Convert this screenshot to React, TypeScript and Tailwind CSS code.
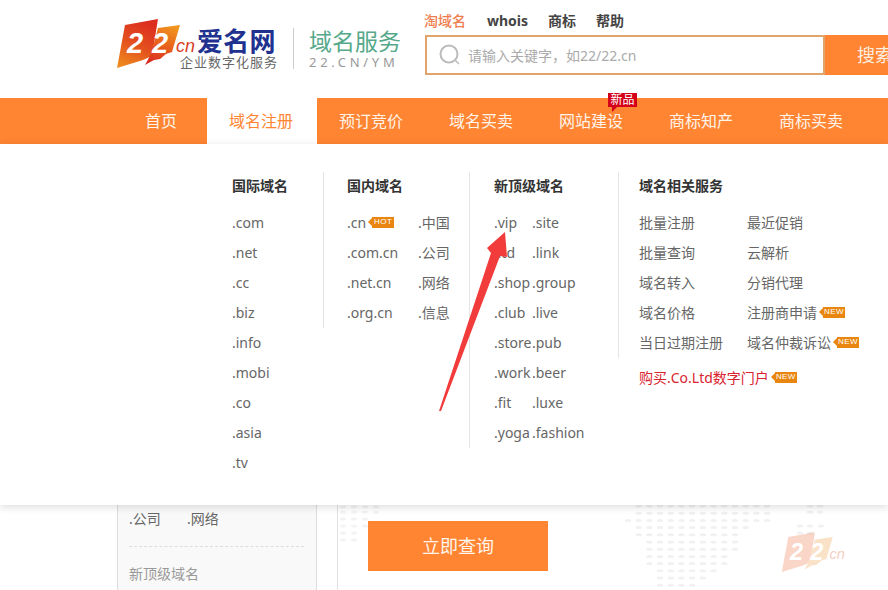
import type { ReactNode } from 'react';

const navItems = ['域名注册', '预订竞价', '域名买卖', '网站建设', '商标知产', '商标买卖'];

const intlDomains = ['.com', '.net', '.cc', '.biz', '.info', '.mobi', '.co', '.asia', '.tv'];

const cnDomains: [string, string][] = [
  ['.cn', '.中国'],
  ['.com.cn', '.公司'],
  ['.net.cn', '.网络'],
  ['.org.cn', '.信息']
];

const newDomains: [string, string][] = [
  ['.vip', '.site'],
  ['.ltd', '.link'],
  ['.shop', '.group'],
  ['.club', '.live'],
  ['.store', '.pub'],
  ['.work', '.beer'],
  ['.fit', '.luxe'],
  ['.yoga', '.fashion']
];

const services: [string, string, boolean][] = [
  ['批量注册', '最近促销', false],
  ['批量查询', '云解析', false],
  ['域名转入', '分销代理', false],
  ['域名价格', '注册商申请', true],
  ['当日过期注册', '域名仲裁诉讼', true]
];

// row widths of the faint world map behind the footer, [first column, column count]
const mapRows: [number, number][] = [
  [1, 13],
  [1, 13],
  [0, 14],
  [1, 11],
  [1, 10],
  [2, 9],
  [2, 9],
  [2, 8],
  [2, 8],
  [3, 6],
  [3, 5],
  [3, 4]
];

function Tag({ label }: { label: string }) {
  return (
    <span className="ml-[2px] inline-flex items-center">
      <span className="h-0 w-0 border-y-[4px] border-r-[4px] border-y-transparent border-r-[#e8860f]" />
      <span className="flex h-[11px] w-[22px] items-center justify-center bg-[#e8860f] font-['Liberation_Sans',sans-serif] text-[8px] leading-none tracking-[0.4px] text-white">
        {label}
      </span>
    </span>
  );
}

function Row({ children }: { children: ReactNode }) {
  return <div className="flex h-[30px] items-center pb-[2px] whitespace-nowrap text-[#666]">{children}</div>;
}

function Heading({ children }: { children: ReactNode }) {
  return <div className="mb-[8px] flex h-[28px] items-center pb-[2px] font-bold text-[#333]">{children}</div>;
}

function LogoShapes({ a, b, cn }: { a: string; b: string; cn: string }) {
  return (
    <>
      <polygon points="9,7 42,1 36,38 27,42 1,50" fill={a} />
      <polygon points="42,10 64,7 56,34 50,36 44,41 38,42 29,47 35,36 38,25" fill={b} />
      <text x="11" y="35" fontFamily="'Liberation Sans', sans-serif" fontSize="29" fontWeight="700" fontStyle="italic" fill="#fff">
        2
      </text>
      <text x="36" y="35" fontFamily="'Liberation Sans', sans-serif" fontSize="29" fontWeight="700" fontStyle="italic" fill="#fff">
        2
      </text>
      <text x="60" y="34" fontFamily="'Liberation Sans', sans-serif" fontSize="18" fontStyle="italic" fill={cn}>
        cn
      </text>
    </>
  );
}

function LogoMark({ className }: { className?: string }) {
  return (
    <svg viewBox="0 0 84 52" className={className}>
      <defs>
        <linearGradient id="flagA" x1="0.6" y1="0" x2="0.2" y2="1">
          <stop offset="0" stopColor="#dc2d20" />
          <stop offset="0.5" stopColor="#e3501e" />
          <stop offset="1" stopColor="#ee8a1e" />
        </linearGradient>
        <linearGradient id="flagB" x1="0.7" y1="0" x2="0.3" y2="1">
          <stop offset="0" stopColor="#f0941f" />
          <stop offset="0.5" stopColor="#e8601c" />
          <stop offset="1" stopColor="#d92a20" />
        </linearGradient>
      </defs>
      <LogoShapes a="url(#flagA)" b="url(#flagB)" cn="#d9401f" />
    </svg>
  );
}

export default function App() {
  return (
    <div className="relative h-[590px] w-[888px] overflow-hidden bg-white font-['Noto_Sans','Noto_Sans_CJK_SC',sans-serif] text-[14px]">
      {/* header */}
      <header className="flex h-[98px] items-start pl-[116px]">
        <LogoMark className="mt-[18px] h-[52px] w-[84px] shrink-0" />
        <div className="mt-[25px] ml-[-20px] w-[98px] shrink-0">
          <div className="h-[32px] pl-[17px] text-[26px] leading-[32px] font-bold tracking-[0.2px] whitespace-nowrap text-[#20318f]">
            爱名网
          </div>
          <div className="mt-[-3px] text-[13px] leading-[16px] tracking-[1px] whitespace-nowrap text-[#666]">
            企业数字化服务
          </div>
        </div>
        <div className="mt-[28px] ml-[15px] h-[41px] w-px shrink-0 bg-[#ccc]" />
        <div className="mt-[25px] ml-[15px] w-[100px] shrink-0">
          <div className="h-[32px] text-[23px] leading-[32px] whitespace-nowrap text-[#55a98a]">域名服务</div>
          <div className="mt-[-3px] text-[13px] leading-[17px] tracking-[3.7px] whitespace-nowrap text-[#999]">22.CN/YM</div>
        </div>
        <div className="ml-[15px] shrink-0 pt-[11px]">
          <div className="flex h-[19px] items-center text-[14px] font-bold whitespace-nowrap text-[#444]">
            <span className="w-[63px] font-medium text-[#ef7d4e]">淘域名</span>
            <span className="w-[61px]">whois</span>
            <span className="w-[48px]">商标</span>
            <span>帮助</span>
          </div>
          <div className="mt-[5px] ml-px flex h-[40px] w-[500px]">
            <div className="flex w-[400px] items-center border-[2px] border-[#dfa56a] pl-[12px]">
              <svg viewBox="0 0 22 22" className="h-[22px] w-[22px]" fill="none" stroke="#bbb">
                <circle cx="10" cy="10" r="8.5" strokeWidth="2" />
                <path d="M16.5 16.5L20 20" strokeWidth="1.5" />
              </svg>
              <span className="ml-[7px] text-[#aaa]">请输入关键字，如22/22.cn</span>
            </div>
            <div className="flex-1 bg-[#ff8533] pl-[32px] text-[18px] leading-[40px] text-[#fdeee0]">搜索</div>
          </div>
        </div>
      </header>

      {/* main nav */}
      <nav className="flex h-[46px] bg-[#ff8533] pl-[123px] text-[16px] leading-[46px] text-[#fff4ea]">
        <div className="w-[84px] pl-[22px]">首页</div>
        {navItems.map((item, i) => (
          <div
            key={item}
            className={`relative w-[110px] pl-[22px] ${i === 0 ? 'bg-white text-[#ff8533]' : ''}`}
          >
            {item}
            {i === 3 && (
              <span className="absolute top-[-5px] left-[71px] flex h-[14px] w-[29px] items-center justify-center bg-[#d4001a] text-[12px] leading-none text-white">
                新品
                <span className="absolute top-[14px] left-[4px] h-0 w-0 border-t-[5px] border-r-[5px] border-t-[#d4001a] border-r-transparent" />
              </span>
            )}
          </div>
        ))}
      </nav>

      {/* dropdown panel */}
      <div className="relative z-10 flex h-[361px] items-start bg-white pt-[28px] pl-[232px] shadow-[0_2px_8px_rgba(0,0,0,0.14)]">
        <div className="w-[91px]">
          <Heading>国际域名</Heading>
          {intlDomains.map((d) => (
            <Row key={d}>{d}</Row>
          ))}
        </div>

        <div className="w-[146px] border-l border-[#e5e5e5] pl-[23px]">
          <Heading>国内域名</Heading>
          {cnDomains.map(([a, b], i) => (
            <Row key={a}>
              <div className="flex w-[71px] items-center">
                {a}
                {i === 0 && <Tag label="HOT" />}
              </div>
              {b}
            </Row>
          ))}
        </div>

        <div className="w-[149px] border-l border-[#e5e5e5] pl-[24px]">
          <Heading>新顶级域名</Heading>
          {newDomains.map(([a, b]) => (
            <Row key={a}>
              <div className="w-[38px]">{a}</div>
              {b}
            </Row>
          ))}
        </div>

        <div>
          <div className="border-l border-[#e5e5e5] pl-[20px]">
            <Heading>域名相关服务</Heading>
            {services.map(([a, b, isNew]) => (
              <Row key={a}>
                <div className="w-[108px]">{a}</div>
                {b}
                {isNew && <Tag label="NEW" />}
              </Row>
            ))}
          </div>
          <div className="mt-[5px] flex h-[30px] items-center pb-[2px] pl-[21px] whitespace-nowrap text-[#d9232e]">
            购买.Co.Ltd数字门户
            <Tag label="NEW" />
          </div>
        </div>

        <svg className="absolute top-0 left-0 h-[361px] w-[888px]" viewBox="0 144 888 361">
          <polygon points="439,411 491,253 487,248 505,232 507,257 500,256 441,411" fill="#f23b3b" />
        </svg>
      </div>

      {/* page content under the panel */}
      <div className="relative flex h-[85px] pl-[117px]">
        <div className="w-[200px] border-x border-[#ddd] bg-[#f9f9f9] px-[11px]">
          <div className="flex h-[28px] items-center pb-[2px] text-[#666]">
            <span className="w-[58px]">.公司</span>
            <span>.网络</span>
          </div>
          <div className="mt-[13px] w-[175px] border-t border-dashed border-[#ddd]" />
          <div className="mt-[17px] leading-[20px] text-[#999]">新顶级域名</div>
        </div>
        <div className="relative ml-[20px] h-full w-[288px] border-l border-[#e2e2e2]">
          <svg className="absolute top-0 left-0 h-[50px] w-[44px]" viewBox="0 0 44 50" fill="#f3f3f3">
            {[2, 7, 14, 21, 28, 35].map((y, i) => (
              <g key={y}>
                {[2, 13, 24, 35].slice(0, 4 - Math.floor(i / 2)).map((x) => (
                  <ellipse key={x} cx={x + 3} cy={y} rx="3" ry="1.5" />
                ))}
              </g>
            ))}
          </svg>
          <button
            type="button"
            className="absolute top-[16px] left-[30px] h-[50px] w-[180px] bg-[#ff8533] text-[18px] text-[#fff4ea]"
          >
            立即查询
          </button>
        </div>
        <svg className="ml-[-1px] h-[85px] w-[264px] shrink-0" viewBox="624 505 264 85">
          <g fill="#f1f1f1">
            {mapRows.map(([start, count], r) =>
              Array.from({ length: count }, (_, c) => (
                <ellipse
                  key={`${r}-${c}`}
                  cx={628 + (start + c) * 10.7}
                  cy={506 + r * 7.2}
                  rx="3.2"
                  ry="1.5"
                />
              ))
            )}
            {[
              [810, 506],
              [820, 506],
              [810, 512],
              [820, 512],
              [800, 526],
              [810, 526],
              [821, 526],
              [800, 533],
              [810, 533]
            ].map(([x, y]) => (
              <ellipse key={`${x}-${y}`} cx={x} cy={y} rx="3.2" ry="1.5" />
            ))}
          </g>
          <g opacity="0.3">
            <svg x="781" y="531" width="68" height="43" viewBox="0 0 84 52">
              <LogoShapes a="#ec7a4a" b="#f0a050" cn="#e06030" />
            </svg>
          </g>
        </svg>
      </div>
    </div>
  );
}
